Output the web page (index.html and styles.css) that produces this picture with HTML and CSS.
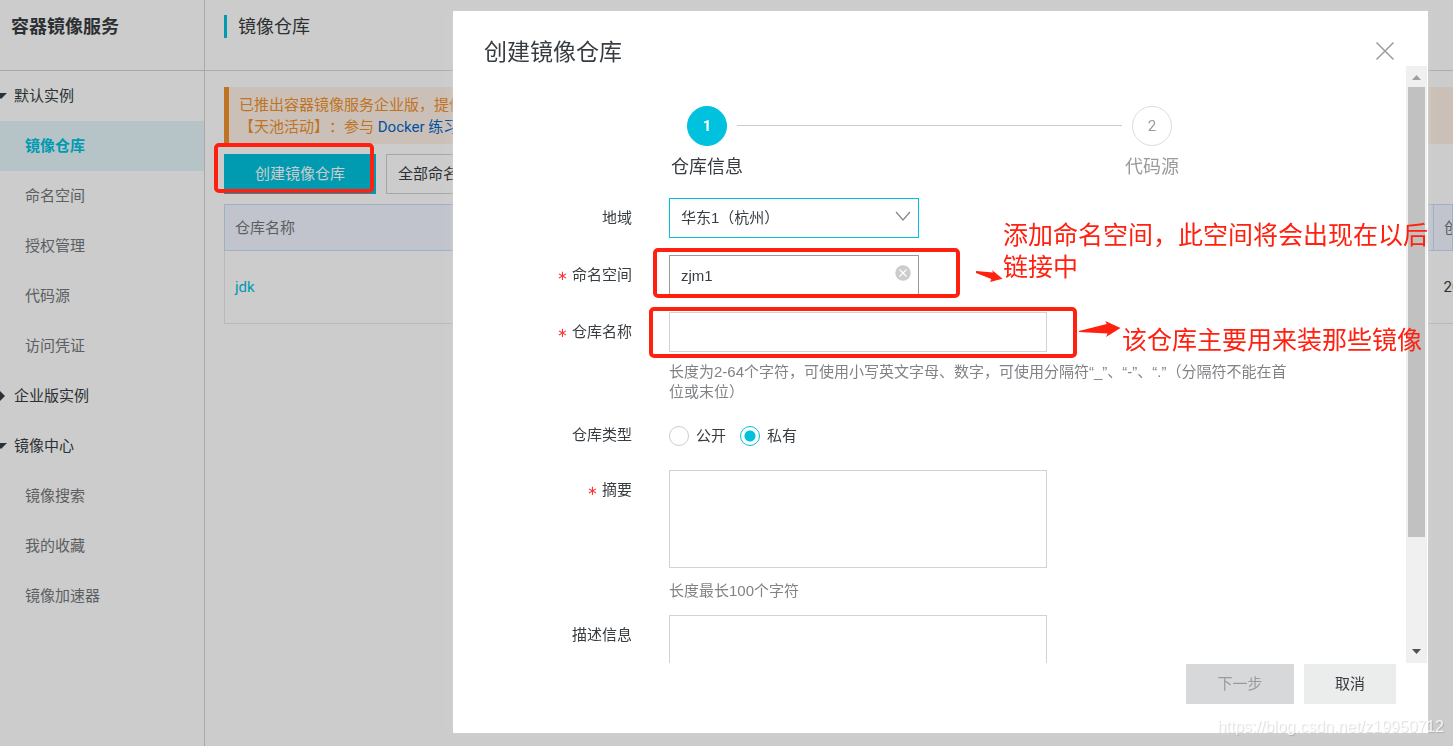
FILE: index.html
```html
<!DOCTYPE html>
<html lang="zh-CN">
<head>
<meta charset="utf-8">
<title>容器镜像服务</title>
<link rel="stylesheet" href="styles.css">
</head>
<body>
<div class="app">
  <aside class="sidebar">
    <h1 class="sidebar-title">容器镜像服务</h1>
    <nav class="nav">
      <button type="button" class="nav-group"><svg width="8" height="10" viewBox="0 0 8 10"><path d="M0 2H7L1 8L0 7Z" fill="currentColor"/></svg>默认实例</button>
      <a href="#" class="nav-item nav-item-active">镜像仓库</a>
      <a href="#" class="nav-item">命名空间</a>
      <a href="#" class="nav-item">授权管理</a>
      <a href="#" class="nav-item">代码源</a>
      <a href="#" class="nav-item">访问凭证</a>
      <button type="button" class="nav-group"><svg width="8" height="12" viewBox="0 0 8 12"><path d="M0 1L5 6L0 11Z" fill="currentColor"/></svg>企业版实例</button>
      <button type="button" class="nav-group"><svg width="8" height="10" viewBox="0 0 8 10"><path d="M0 2H7L1 8L0 7Z" fill="currentColor"/></svg>镜像中心</button>
      <a href="#" class="nav-item">镜像搜索</a>
      <a href="#" class="nav-item">我的收藏</a>
      <a href="#" class="nav-item">镜像加速器</a>
    </nav>
  </aside>
  <main class="main">
    <header class="page-head"><h2 class="page-title">镜像仓库</h2></header>
    <div class="content">
      <div class="notice">
        <p>已推出容器镜像服务企业版，提供</p>
        <p>【天池活动】：参与 <a href="#">Docker 练习</a></p>
      </div>
      <div class="toolbar">
        <button type="button" class="btn btn-primary">创建镜像仓库</button>
        <button type="button" class="btn btn-filter">全部命名</button>
      </div>
      <table class="repos">
        <thead><tr><th>仓库名称</th><th class="created">创</th></tr></thead>
        <tbody><tr><td><a href="#">jdk</a></td><td class="created">20</td></tr></tbody>
      </table>
    </div>
  </main>
</div>

<div class="overlay">
  <section class="modal" role="dialog" aria-labelledby="dialog-title">
    <header class="modal-head">
      <h2 id="dialog-title">创建镜像仓库</h2>
      <button type="button" class="close" aria-label="关闭"><svg width="20" height="20" viewBox="0 0 20 20"><path d="M1.500 1.500L18.500 18.500M18.500 1.500L1.500 18.500" fill="none" stroke="#999b9d" stroke-width="1.500"/></svg></button>
    </header>
    <div class="modal-body">
      <div class="modal-content">
        <ol class="steps">
          <li class="step step-on"><span class="dot">1</span><span class="step-name">仓库信息</span></li>
          <li class="step-line" aria-hidden="true"></li>
          <li class="step"><span class="dot">2</span><span class="step-name">代码源</span></li>
        </ol>
        <form class="form">
          <div class="row">
            <label class="label" for="region">地域</label>
            <div class="control control-short">
              <select id="region" class="box box-focus"><option>华东1（杭州）</option></select>
              <svg class="control-icon" width="16" height="16" viewBox="0 0 16 16"><path d="M1 4L8 12L15 4" fill="none" stroke="#888" stroke-width="1.200"/></svg>
            </div>
          </div>
          <div class="row">
            <label class="label required" for="space">命名空间</label>
            <div class="control control-short">
              <input id="space" class="box box-hover" type="text" value="zjm1">
              <svg class="control-icon" width="16" height="16" viewBox="0 0 16 16"><circle cx="8" cy="8" r="7.700" fill="#ccc"/><path d="M4.500 4.500L11.500 11.500M11.500 4.500L4.500 11.500" stroke="#fff" stroke-width="1.200"/></svg>
            </div>
          </div>
          <div class="row">
            <label class="label required" for="repo">仓库名称</label>
            <div>
              <input id="repo" class="box box-wide" type="text">
              <p class="hint">长度为2-64个字符，可使用小写英文字母、数字，可使用分隔符“_”、“-”、“.”（分隔符不能在首位或末位）</p>
            </div>
          </div>
          <div class="row row-radio" role="radiogroup" aria-labelledby="kind">
            <span class="label" id="kind">仓库类型</span>
            <div class="radios">
              <label><input type="radio" name="kind">公开</label>
              <label><input type="radio" name="kind" checked>私有</label>
            </div>
          </div>
          <div class="row row-area">
            <label class="label required" for="summary">摘要</label>
            <div>
              <textarea id="summary" class="box box-wide area"></textarea>
              <p class="hint">长度最长100个字符</p>
            </div>
          </div>
          <div class="row row-area">
            <label class="label" for="desc">描述信息</label>
            <textarea id="desc" class="box box-wide area"></textarea>
          </div>
        </form>
      </div>
      <div class="scrollbar" aria-hidden="true">
        <svg width="21" height="21" viewBox="0 0 21 21"><path d="M6 14L10.500 9L15 14Z" fill="#a0a0a0"/></svg>
        <div class="track"><div class="thumb"></div></div>
        <svg width="21" height="21" viewBox="0 0 21 21"><path d="M6 7L10.500 12L15 7Z" fill="#505050"/></svg>
      </div>
    </div>
    <footer class="modal-foot">
      <button type="button" class="btn btn-next" disabled>下一步</button>
      <button type="button" class="btn btn-cancel">取消</button>
    </footer>
  </section>
</div>

<div class="marks">
  <div class="frame frame-create"></div>
  <div class="frame frame-space"></div>
  <div class="frame frame-repo"></div>
  <svg class="arrows" width="150" height="70" viewBox="975 269 150 70"><path d="M976 271L993 272.500L992 270L1002.500 278.700L990 282L991.400 279L976 273Z M1079 331L1106.700 324L1105.300 321L1120.500 328L1106 337L1107.700 333.500L1079 332Z" fill="#ff2010"/></svg>
  <p class="note note-space">添加命名空间，此空间将会出现在以后<br>链接中</p>
  <p class="note note-repo">该仓库主要用来装那些镜像</p>
</div>
<p class="watermark">https://blog.csdn.net/z19950712</p>
</body>
</html>
```
FILE: styles.css
```css
* { box-sizing: border-box; }
body, h1, h2, p, ol { margin: 0; padding: 0; }
body {
  height: 100vh;
  overflow: hidden;
  font: 15px/22px Roboto, "Noto Sans CJK SC", sans-serif;
  text-spacing-trim: space-all;
  color: #373d41;
  background: #fff;
}
button, input, select, textarea { font: inherit; color: inherit; margin: 0; border-radius: 0; text-spacing-trim: inherit; }
button { border: 0; background: none; padding: 0; }
a { color: #00c1de; text-decoration: none; }
svg { display: block; flex: none; }

.app { display: flex; min-height: 100vh; }
.sidebar { flex: none; width: 205px; border-right: 1px solid #d3d3d3; }
.sidebar-title {
  height: 71px;
  padding: 15px 0 0 11px;
  border-bottom: 1px solid #d3d3d3;
  font-size: 18px;
  line-height: 24px;
}
.nav { display: flex; flex-direction: column; }
.nav-group { display: flex; align-items: center; gap: 6px; height: 50px; }
.nav-item { height: 50px; padding-left: 25px; line-height: 50px; color: #73777a; }
.nav-item-active { background: #e4f6fa; color: #00c1de; font-weight: bold; }

.main { flex: 1; min-width: 0; }
.page-head { height: 71px; padding: 15px 19px 0; border-bottom: 1px solid #d9d9d9; }
.page-title { padding-left: 11px; border-left: 3px solid #00c1de; font-size: 18px; font-weight: normal; line-height: 23px; }
.content { display: flex; flex-direction: column; gap: 10px; padding: 16px 0 0 19px; }
.notice { padding: 7px 10px 6px; border-left: 5px solid #f0902c; background: #fef1e5; color: #f0902c; }
.notice a { color: #0066cc; }
.toolbar { display: flex; gap: 10px; }
.btn { height: 40px; }
.btn-primary { width: 152px; background: #00c1de; color: #fff; }
.btn-filter { width: 150px; padding-left: 11px; border: 1px solid #d0d0d0; text-align: left; }
.repos { width: 100%; border-collapse: collapse; }
.repos th { height: 46px; padding: 0 10px; border: 1px solid #c5dcf7; background: #f2f5ff; color: #73777a; text-align: left; font-weight: normal; }
.repos td { height: 73px; padding: 0 10px; border-bottom: 1px solid #e8e8e8; }
.repos td:first-child { border-left: 1px solid #e8e8e8; }
.repos .created { width: 19px; padding-right: 0; max-width: 19px; overflow: hidden; white-space: nowrap; }

.overlay { position: fixed; inset: 0; padding: 11px 25px 13px 453px; background: rgba(0, 0, 0, .2); }
.modal { display: flex; flex-direction: column; height: 100%; background: #fff; box-shadow: 0 0 4px 1px rgba(208, 208, 208, .7); }
.modal-head { display: flex; justify-content: space-between; align-items: center; height: 55px; flex: none; padding: 25px 33px 0 31px; }
.modal-head h2 { font-size: 23px; font-weight: normal; line-height: 34px; padding-top: 3px; }
.modal-body { display: flex; flex: 1; min-height: 0; margin-right: 1px; }
.modal-content { flex: 1; overflow: hidden; }
.steps { display: flex; padding: 40px 234px 0; list-style: none; }
.step { display: flex; flex-direction: column; align-items: center; gap: 9px; width: 40px; color: #999b9d; }
.step-on { color: #373d41; }
.dot { width: 40px; height: 40px; border: 1px solid #ddd; border-radius: 50%; line-height: 38px; text-align: center; }
.step-on .dot { background: #00c1de; border-color: #00c1de; color: #fff; font-weight: bold; }
.step-name { font-size: 18px; line-height: 24px; white-space: nowrap; }
.step-line { flex: 1; height: 1px; margin: 19px 10px 0; background: #ccc; }

.form { display: flex; flex-direction: column; gap: 17px; padding-top: 19px; font-family: "Liberation Sans", "Noto Sans CJK SC", sans-serif; }
.row { display: grid; grid-template-columns: 179px 1fr; column-gap: 37px; align-items: start; }
.label { height: 40px; text-align: right; line-height: 40px; }
.required::before { content: "∗"; margin-right: 4px; color: #f33; font-family: "DejaVu Sans", sans-serif; font-size: 13px; line-height: 1; }
.control { position: relative; }
.control-short { width: 250px; }
.control-icon { position: absolute; right: 8px; top: 10px; pointer-events: none; }
.box { display: block; width: 100%; height: 40px; padding: 0 11px; border: 1px solid #d2d2d2; background: #fff; outline: 0; appearance: none; resize: none; }
.box-focus { border-color: #00c1de; }
.box-hover { border-color: #999; }
.box-wide { width: 378px; }
.area { height: 98px; }
.hint { max-width: 624px; margin-top: 10px; line-height: 20px; color: #808386; }
.row-radio { height: 34px; }
.row-radio .label { line-height: 32px; }
.radios { display: flex; gap: 14px; line-height: 34px; }
.radios label { display: flex; align-items: center; gap: 7px; }
.radios input { appearance: none; width: 20px; height: 20px; border: 1px solid #ccc; border-radius: 50%; }
.radios input:checked { border-color: #00c1de; background: radial-gradient(circle, #00c1de 5px, #fff 6px); }
.row-area .hint { margin-top: 13px; }
.row-area + .row-area { margin-top: -3px; }

.scrollbar { display: flex; flex-direction: column; width: 21px; background: #f0f0f0; }
.track { flex: 1; padding: 0 2px; }
.thumb { height: 81%; background: #c1c1c1; }
.modal-foot { display: flex; justify-content: flex-end; gap: 10px; flex: none; padding: 1px 32px 29px; }
.btn-next { width: 108px; background: #d7d8d9; color: #999b9d; }
.btn-cancel { width: 92px; background: #ebecec; }

.marks { position: absolute; inset: 0; pointer-events: none; color: #ff2010; }
.frame { position: absolute; border: 4px solid #ff2010; border-radius: 5px; }
.frame-create { left: 214px; top: 143px; width: 160px; height: 50px; }
.frame-space { left: 653px; top: 248px; width: 307px; height: 50px; }
.frame-repo { left: 649px; top: 307px; width: 428px; height: 51px; }
.arrows { position: absolute; left: 975px; top: 269px; }
.note { position: absolute; font-size: 25px; line-height: 32px; white-space: nowrap; }
.note-space { left: 1003px; top: 220px; }
.note-repo { left: 1122px; top: 325px; }
.watermark { position: absolute; right: 9px; bottom: 8px; font: 16px/22px "Liberation Sans", sans-serif; color: rgba(255, 255, 255, .8); text-shadow: 1px 1px 1px rgba(0, 0, 0, .15); }
```
